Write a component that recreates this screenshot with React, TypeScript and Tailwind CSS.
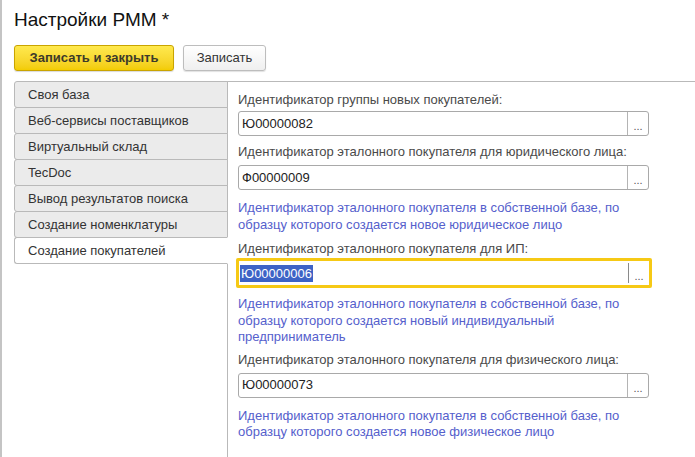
import React from "react";

const tabs = [
  "Своя база",
  "Веб-сервисы поставщиков",
  "Виртуальный склад",
  "TecDoc",
  "Вывод результатов поиска",
  "Создание номенклатуры",
  "Создание покупателей",
];

function Field({ value, active = false }: { value: string; active?: boolean }) {
  if (active) {
    return (
      <div className="-ml-[2px] flex h-[30px] w-[416px] rounded-[2px] border-[3px] border-[#f6c915] bg-white">
        <div className="flex flex-1 items-center pl-[1px]">
          <span className="bg-[#3d63c6] px-[1px] text-[13px] leading-[17px] text-white">{value}</span>
        </div>
        <div className="my-[2px] w-px bg-[#8a8a8a]" />
        <div className="flex w-[20px] items-end justify-center pb-[3px] text-[11px] leading-[12px] text-[#555]">...</div>
      </div>
    );
  }
  return (
    <div className="flex h-[25px] w-[411px] rounded-[3px] border border-[#a9a9a9] bg-white">
      <div className="flex flex-1 items-center pl-[3px] text-[13px] text-[#222]">{value}</div>
      <div className="w-px bg-[#b4b4b4]" />
      <div className="flex w-[20px] items-end justify-center pb-[3px] text-[11px] leading-[12px] text-[#555]">...</div>
    </div>
  );
}

function Label({ children, className = "" }: { children: React.ReactNode; className?: string }) {
  return <div className={"h-[16px] text-[13px] leading-[16px] text-[#4a4a4a] " + className}>{children}</div>;
}

function Hint({ children, className = "" }: { children: React.ReactNode; className?: string }) {
  return <div className={"w-[411px] text-[13px] leading-[16.5px] text-[#5560cc] " + className}>{children}</div>;
}

export default function App() {
  return (
    <div
      className="flex h-[457px] w-[695px] flex-col overflow-hidden border-l-2 border-[#c4c4c4] bg-white"
      style={{ fontFamily: '"Liberation Sans", Arial, sans-serif' }}
    >
      <div className="pl-3 pt-[9px] text-[19px] leading-[22px] text-[#111]">Настройки РММ *</div>

      <div className="mt-[14px] flex gap-[9px] pl-3">
        <button className="h-[26px] w-[160px] rounded-[3px] border border-[#c9a400] bg-gradient-to-b from-[#ffe94d] to-[#f3cc00] text-[13px] font-bold text-[#3d3a2a] shadow-[0_1px_1px_rgba(0,0,0,0.15)]">
          Записать и закрыть
        </button>
        <button className="h-[26px] w-[83px] rounded-[3px] border border-[#bdbdbd] bg-gradient-to-b from-white to-[#efefef] text-[13px] text-[#333] shadow-[0_1px_1px_rgba(0,0,0,0.12)]">
          Записать
        </button>
      </div>

      <div className="mt-[10px] flex flex-1 pl-3">
        <div className="relative z-10 flex w-[214px] flex-col">
          {tabs.map((t, i) => {
            const sel = i === tabs.length - 1;
            return (
              <div
                key={t}
                className={
                  sel
                    ? "-mt-px flex h-[27px] items-center rounded-l-[3px] border border-[#b9b9b9] border-r-white bg-white pl-[13px] text-[13px] text-[#333]"
                    : (i === 0 ? "" : "-mt-px ") +
                      "flex h-[27px] items-center rounded-l-[3px] border border-[#b9b9b9] bg-[#ebebeb] pl-[13px] text-[13px] text-[#333]"
                }
              >
                {t}
              </div>
            );
          })}
        </div>

        <div className="-ml-px flex-1 border-l border-t border-[#b9b9b9] pl-[10px]">
          <Label className="mt-[10px]">Идентификатор группы новых покупателей:</Label>
          <div className="mt-[3px]">
            <Field value="Ю00000082" />
          </div>

          <Label className="mt-[8px]">Идентификатор эталонного покупателя для юридического лица:</Label>
          <div className="mt-[5px]">
            <Field value="Ф00000009" />
          </div>
          <Hint className="mt-[10px]">
            Идентификатор эталонного покупателя в собственной базе, по образцу которого создается новое юридическое лицо
          </Hint>

          <Label className="mt-[8px]">Идентификатор эталонного покупателя для ИП:</Label>
          <div className="mt-[1px]">
            <Field value="Ю00000006" active />
          </div>
          <Hint className="mt-[8px]">
            Идентификатор эталонного покупателя в собственной базе, по образцу которого создается новый индивидуальный предприниматель
          </Hint>

          <Label className="mt-[6px]">Идентификатор эталонного покупателя для физического лица:</Label>
          <div className="mt-[5px]">
            <Field value="Ю00000073" />
          </div>
          <Hint className="mt-[10px]">
            Идентификатор эталонного покупателя в собственной базе, по образцу которого создается новое физическое лицо
          </Hint>
        </div>
      </div>
    </div>
  );
}
